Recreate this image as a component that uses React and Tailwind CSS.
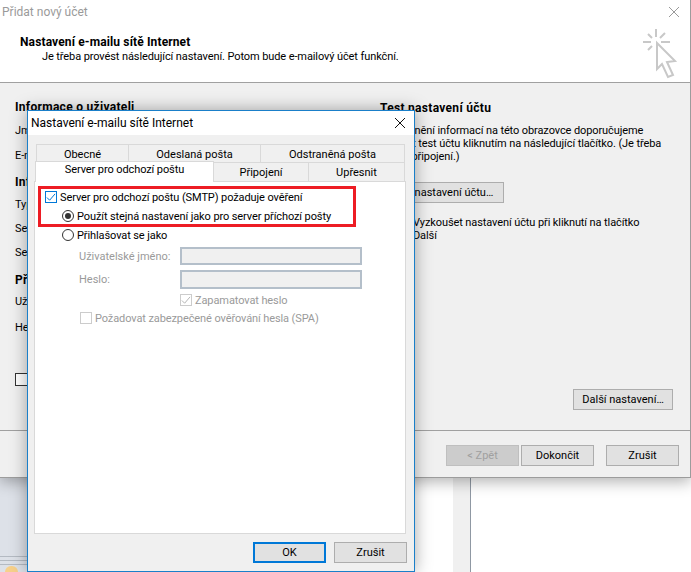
const font = { fontFamily: 'Roboto, "Liberation Sans", sans-serif' };

const Btn = ({ children, className = "" }) => (
  <div className={`flex h-[21px] items-center justify-center border border-[#adadad] bg-[#e1e1e1] pt-[2px] text-[11px] text-black ${className}`}>
    {children}
  </div>
);

const Check = ({ color }) => (
  <svg width="11" height="11" viewBox="0 0 11 11" fill="none">
    <path d="M1 5.5 L4 8.5 L10 1.5" stroke={color} strokeWidth="1.1" />
  </svg>
);

const CheckBox = ({ checked, border, color }) => (
  <div className="flex h-[12px] w-[12px] shrink-0 items-center justify-center border bg-white" style={{ borderColor: border }}>
    {checked && <Check color={color} />}
  </div>
);

const Radio = ({ on }) => (
  <div className="flex h-[12px] w-[12px] shrink-0 items-center justify-center rounded-full border border-[#333333] bg-white">
    {on && <div className="h-[6px] w-[6px] rounded-full bg-[#333333]" />}
  </div>
);

const Row = ({ className = "", children }) => (
  <div className={`flex h-[16px] items-center whitespace-nowrap text-[11px] leading-[16px] tracking-[-0.1px] ${className}`}>{children}</div>
);

const Head = ({ className = "", children }) => (
  <div className={`flex h-[16px] items-center whitespace-nowrap text-[12px] font-bold leading-[16px] tracking-[0.3px] ${className}`}>{children}</div>
);

const BackWindow = () => (
  <div className="absolute left-0 top-0 flex h-[478px] w-[691px] flex-col border-b border-r border-[#9c9c9c] bg-[#f0f0f0] shadow-[0_4px_14px_rgba(0,0,0,0.3)]">
    {/* header */}
    <div className="relative h-[83px] shrink-0 border-b border-[#a0a0a0] bg-white pt-[4px]">
      <div className="pl-[2px] text-[12px] leading-[16px] text-[#9a9a9a]">Přidat nový účet</div>
      <div className="mt-[14px] pl-[20px] text-[12px] font-bold leading-[16px] tracking-[0.13px] text-black">Nastavení e-mailu sítě Internet</div>
      <div className="-mt-[1px] pl-[42px] text-[11px] leading-[16px] tracking-[-0.1px] text-black">Je třeba provést následující nastavení. Potom bude e-mailový účet funkční.</div>
      <svg className="absolute left-[667px] top-[5px]" width="14" height="14" viewBox="0 0 14 14" fill="none">
        <path d="M2 2 L12 12 M12 2 L2 12" stroke="#9a9a9a" strokeWidth="1" />
      </svg>
      <svg className="absolute left-[640px] top-[25px]" width="44" height="56" viewBox="0 0 44 56" fill="none" stroke="#c8c8c8" strokeWidth="2">
        <path d="M3 17 H11 M21 17 H30 M16 4 V12 M8 9 L12 13 M25 8 L20 13 M8 25 L12 21" />
        <path d="M17 18 L35 36 L27 37 L33 50 L28 52 L22 39 L17 44 Z" />
      </svg>
    </div>

    {/* body */}
    <div className="flex min-h-0 flex-1 text-black">
      <div className="w-[380px] shrink-0 pl-[15px] pt-[16px]">
        <Head>Informace o uživateli</Head>
        <Row className="mt-[8px]">Jméno:</Row>
        <Row className="mt-[9px]">E-mailová adresa:</Row>
        <Head className="mt-[10px]">Informace o serveru</Head>
        <Row className="mt-[7px]">Typ účtu:</Row>
        <Row className="mt-[8px]">Server příchozí pošty:</Row>
        <Row className="mt-[8px]">Server odchozí pošty (SMTP):</Row>
        <Head className="mt-[11px]">Přihlašovací údaje</Head>
        <Row className="mt-[6px]">Uživatelské jméno:</Row>
        <Row className="mt-[10px]">Heslo:</Row>
        <div className="mt-[37px] h-[13px] w-[13px] border border-[#333333] bg-white" />
      </div>
      <div className="flex flex-1 flex-col pt-[17px]">
        <Head>Test nastavení účtu</Head>
        <div className="mt-[8px] whitespace-nowrap text-[11px] leading-[13px] tracking-[-0.1px]">
          Po vyplnění informací na této obrazovce doporučujeme
          <br />
          provést test účtu kliknutím na následující tlačítko. (Je třeba
          <br />
          síťové připojení.)
        </div>
        <Btn className="mt-[19px] w-[124px]">Test nastavení účtu…</Btn>
        <div className="mt-[13px] whitespace-nowrap pl-[33px] text-[11px] leading-[13px] tracking-[-0.1px]">
          Vyzkoušet nastavení účtu při kliknutí na tlačítko
          <br />
          Další
        </div>
        <Btn className="mb-[20px] ml-[193px] mt-auto w-[100px]">Další nastavení…</Btn>
      </div>
    </div>

    {/* footer */}
    <div className="flex h-[47px] shrink-0 items-start border-t border-[#a0a0a0] pr-[11px] pt-[14px]">
      <Btn className="ml-auto w-[73px] !border-[#bfbfbf] !bg-[#cccccc] !text-[#a0a0a0]">&lt; Zpět</Btn>
      <Btn className="ml-[2px] w-[73px]">Dokončit</Btn>
      <Btn className="ml-[12px] w-[73px]">Zrušit</Btn>
    </div>
  </div>
);

const Dialog = () => (
  <div className="absolute left-[27px] top-[110px] flex h-[462px] w-[388px] flex-col border border-[#1a7fc9] bg-[#f0f0f0] shadow-[0_0_16px_rgba(0,0,0,0.35)]">
    <div className="flex h-[24px] shrink-0 items-center justify-between bg-white pl-[3px] pr-[8px] text-[12px] text-black">
      <span>Nastavení e-mailu sítě Internet</span>
      <svg width="12" height="12" viewBox="0 0 12 12" fill="none">
        <path d="M1 1 L11 11 M11 1 L1 11" stroke="#111111" strokeWidth="1" />
      </svg>
    </div>

    {/* tabs */}
    <div className="ml-[8px] mt-[9px] flex h-[18px] w-[369px] text-[11px] text-black">
      <div className="flex w-[93px] items-center justify-center border border-b-0 border-[#d9d9d9] pt-[4px]">Obecné</div>
      <div className="flex w-[132px] items-center justify-center border border-b-0 border-l-0 border-[#d9d9d9] pt-[4px]">Odeslaná pošta</div>
      <div className="flex flex-1 items-center justify-center border border-b-0 border-l-0 border-[#d9d9d9] pt-[4px]">Odstraněná pošta</div>
    </div>
    <div className="relative z-10 -mt-[1px] ml-[7px] flex h-[21px] w-[370px] items-end text-[11px] text-black">
      <div className="flex h-[21px] w-[179px] items-start justify-center border border-b-0 border-[#d9d9d9] bg-white tracking-[-0.1px]">Server pro odchozí poštu</div>
      <div className="flex h-[20px] w-[95px] items-center justify-center border-r border-t border-[#d9d9d9] pt-[2px]">Připojení</div>
      <div className="flex h-[20px] w-[96px] items-center justify-center border-r border-t border-[#d9d9d9] pt-[2px]">Upřesnit</div>
    </div>

    {/* panel */}
    <div className="relative -mt-[1px] ml-[6px] h-[353px] w-[372px] shrink-0 border border-[#d9d9d9] bg-white pt-[7px] text-black">
      <Row className="pl-[10px]">
        <CheckBox checked border="#0078d7" color="#0078d7" />
        <span className="ml-[3px] mt-[2px]">Server pro odchozí poštu (SMTP) požaduje ověření</span>
      </Row>
      <Row className="mt-[3px] pl-[27px]">
        <Radio on />
        <span className="ml-[3px] mt-[2px]">Použít stejná nastavení jako pro server příchozí pošty</span>
      </Row>
      <Row className="mt-[3px] pl-[27px]">
        <Radio />
        <span className="ml-[3px] mt-[2px]">Přihlašovat se jako</span>
      </Row>
      <div className="mt-[4px] flex h-[18px] items-center pl-[44px] text-[11px] text-[#9a9a9a]">
        <span className="mt-[2px] w-[101px] whitespace-nowrap">Uživatelské jméno:</span>
        <div className="h-full w-[182px] border-2 border-[#b4bfca] bg-[#f0f0f0]" />
      </div>
      <div className="mt-[5px] flex h-[19px] items-center pl-[44px] text-[11px] text-[#9a9a9a]">
        <span className="mt-[2px] w-[101px]">Heslo:</span>
        <div className="h-full w-[182px] border-2 border-[#b4bfca] bg-[#f0f0f0]" />
      </div>
      <Row className="mt-[3px] pl-[145px] text-[#9a9a9a]">
        <CheckBox checked border="#cccccc" color="#b5b5b5" />
        <span className="ml-[3px] mt-[2px]">Zapamatovat heslo</span>
      </Row>
      <Row className="mt-[2px] pl-[45px] text-[#9a9a9a]">
        <CheckBox border="#cccccc" />
        <span className="ml-[3px] mt-[2px]">Požadovat zabezpečené ověřování hesla (SPA)</span>
      </Row>
      {/* red annotation */}
      <div className="absolute left-[3px] top-[4px] h-[41px] w-[318px] border-[3px] border-[#ed1c24]" />
    </div>

    <div className="mr-[7px] mt-[8px] flex justify-end gap-[8px]">
      <Btn className="w-[73px] !border-2 !border-[#0078d7]">OK</Btn>
      <Btn className="w-[73px]">Zrušit</Btn>
    </div>
  </div>
);

export default function App() {
  return (
    <div className="relative h-[572px] w-[691px] overflow-hidden bg-white" style={font}>
      {/* desktop behind the windows */}
      <div className="flex h-full">
        <div className="flex w-[415px] flex-col justify-end bg-[#dde1e8]">
          <div className="h-[16px] border-t border-[#b4bac2] pt-[3px]">
            <div className="h-[2px] border-t border-[#b4bac2]" />
            <div className="mt-[2px] border-t border-[#b4bac2]" />
          </div>
        </div>
        <div className="w-[38px] bg-white" />
        <div className="w-[18px] border-r border-[#8f98a3] bg-[#f0f0f0]" />
      </div>
      <div className="absolute bottom-0 left-[5px] h-[6px] w-[13px] rounded-t-full bg-[#f7d08a]" />
      <BackWindow />
      <Dialog />
    </div>
  );
}
